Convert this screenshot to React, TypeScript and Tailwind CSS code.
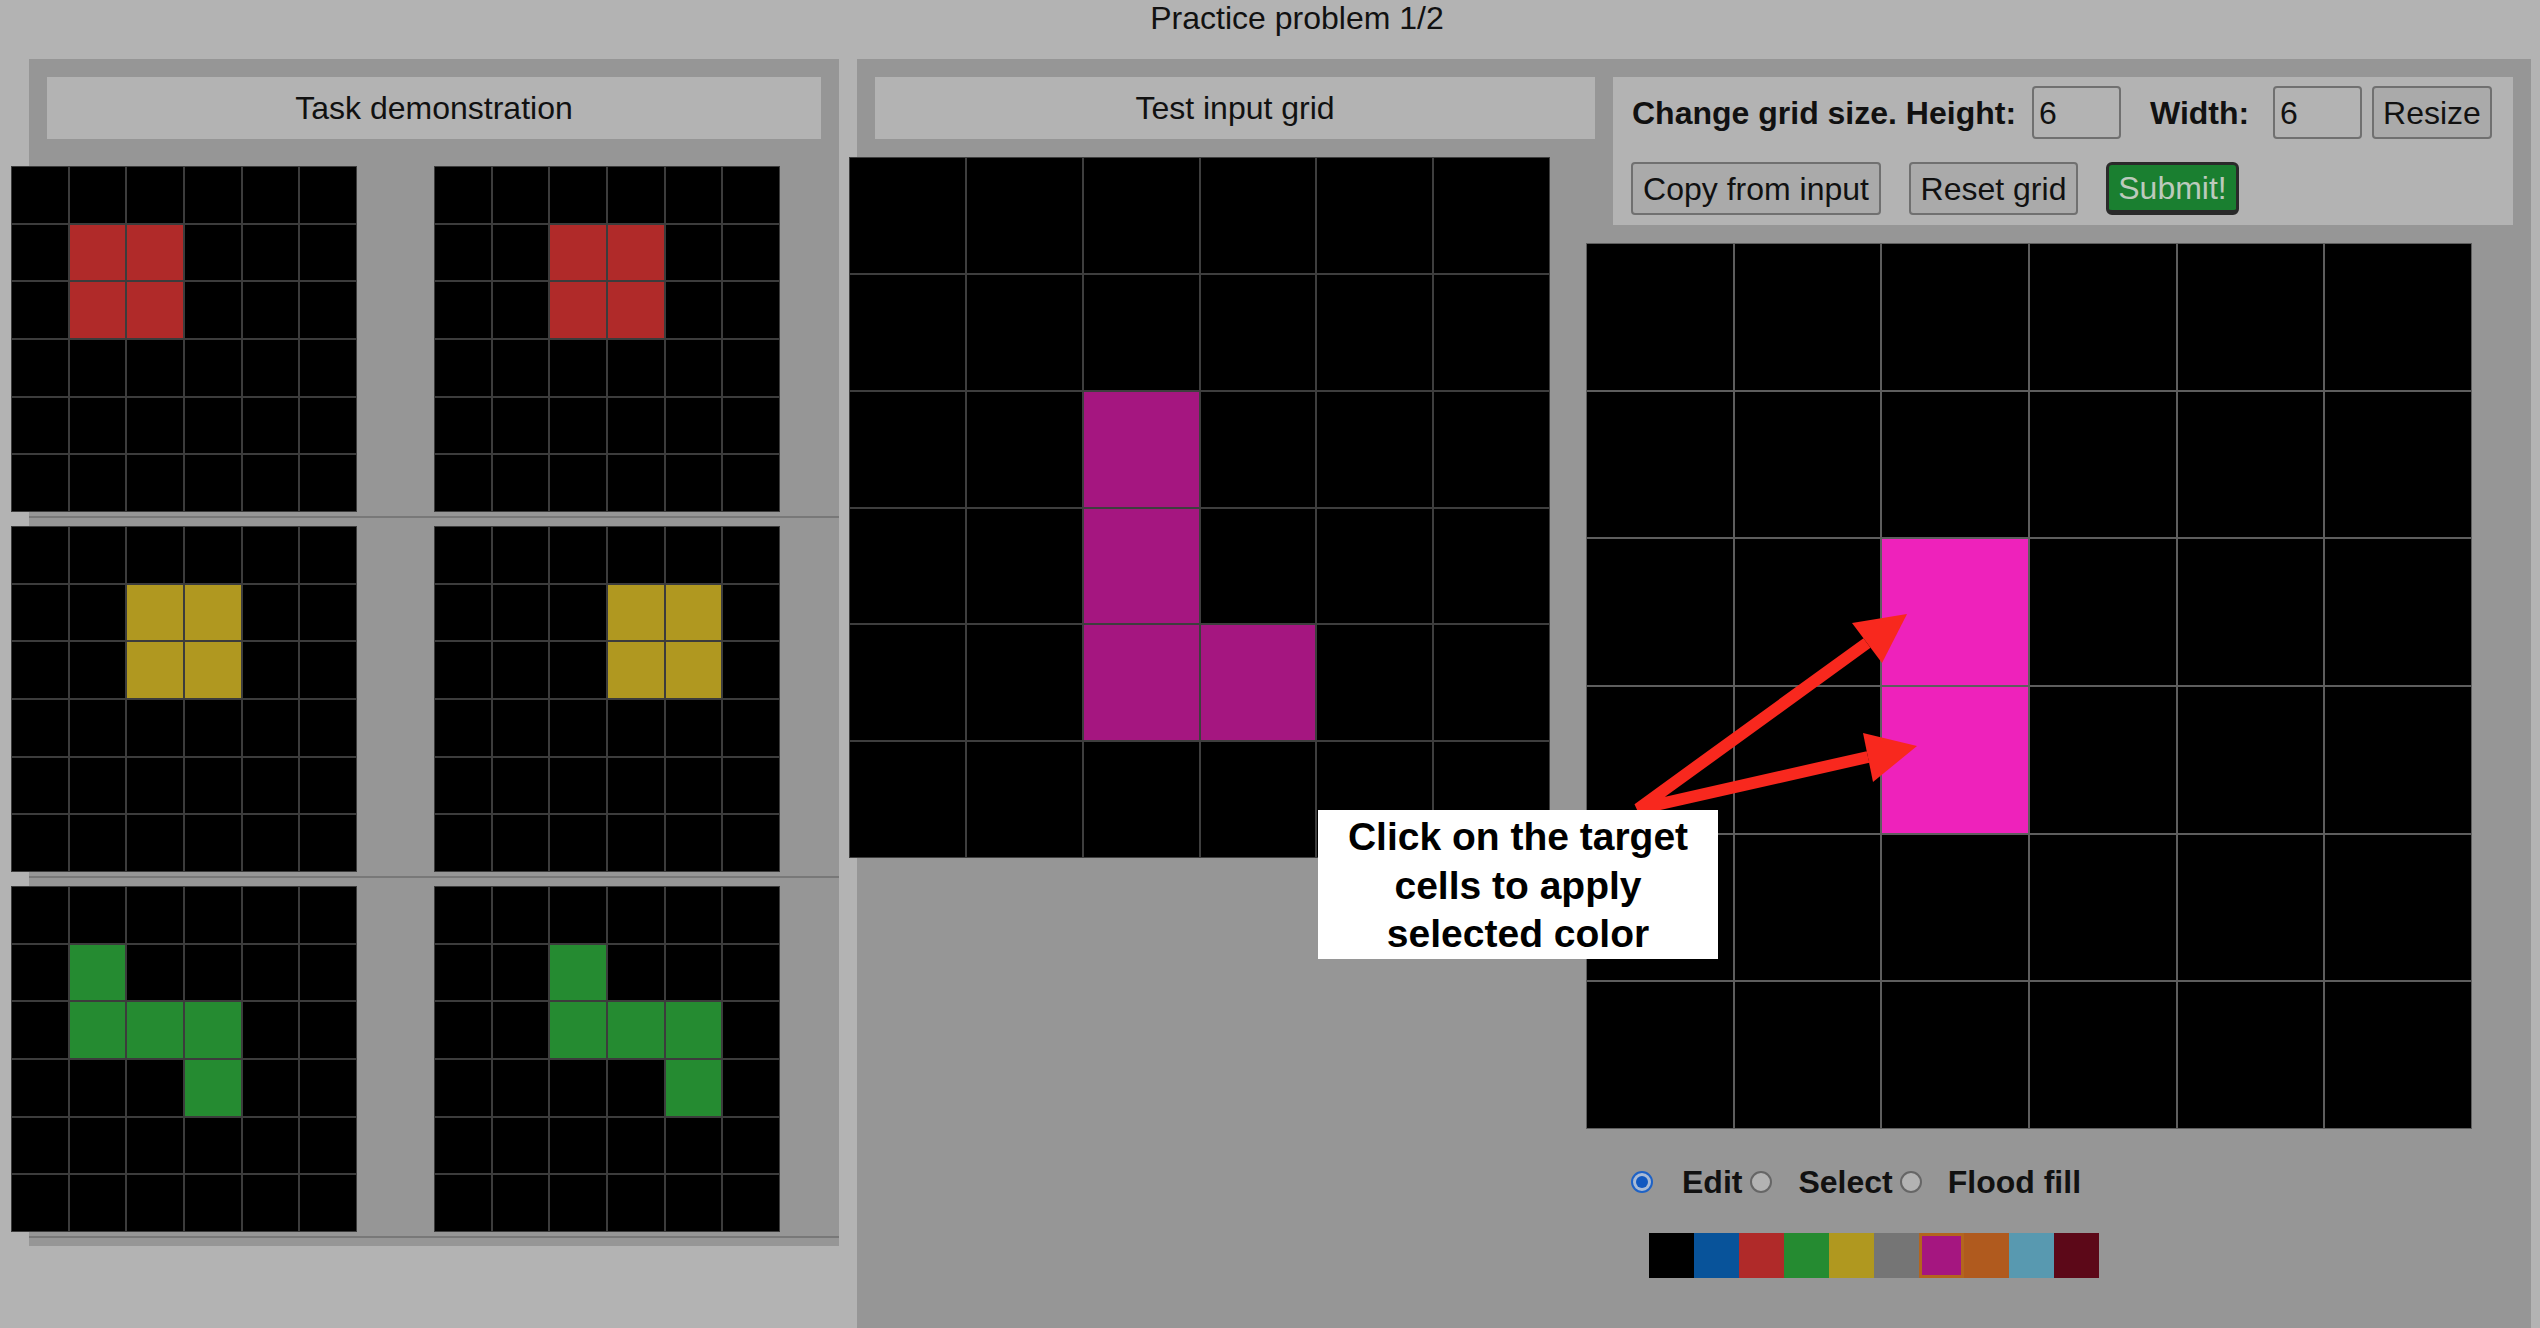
import React from 'react';

const colorClass: Record<string, string> = {
  '.': 'bg-black',
  R: 'bg-[#b02a29]',
  Y: 'bg-[#b09820]',
  G: 'bg-[#258b31]',
  M: 'bg-[#a51680]',
  P: 'bg-[#ee22bb]',
};

const demoPairs: string[][][] = [
  [
    ['......', '.RR...', '.RR...', '......', '......', '......'],
    ['......', '..RR..', '..RR..', '......', '......', '......'],
  ],
  [
    ['......', '..YY..', '..YY..', '......', '......', '......'],
    ['......', '...YY.', '...YY.', '......', '......', '......'],
  ],
  [
    ['......', '.G....', '.GGG..', '...G..', '......', '......'],
    ['......', '..G...', '..GGG.', '....G.', '......', '......'],
  ],
];

const testInput = ['......', '......', '..M...', '..M...', '..MM..', '......'];
const testOutput = ['......', '......', '..P...', '..P...', '......', '......'];

const palette = [
  'bg-black',
  'bg-[#08539a]',
  'bg-[#b02a29]',
  'bg-[#258b31]',
  'bg-[#b0981f]',
  'bg-[#757575]',
  'bg-[#a51680]',
  'bg-[#b05a1e]',
  'bg-[#5899b0]',
  'bg-[#5c0818]',
];

const Grid = ({ rows, sizeClass, lineClass }: { rows: string[]; sizeClass: string; lineClass: string }) => (
  <div className={`grid grid-cols-6 grid-rows-6 shrink-0 ${sizeClass}`}>
    {rows.map((row, r) =>
      row.split('').map((c, i) => <div key={`${r}-${i}`} className={`border ${lineClass} ${colorClass[c]}`} />)
    )}
  </div>
);

const Radio = ({ checked }: { checked?: boolean }) =>
  checked ? (
    <div className="w-[22px] h-[22px] rounded-full border-[2px] border-[#1e62c6] bg-[#a9bbd6] flex items-center justify-center shrink-0">
      <div className="w-[12px] h-[12px] rounded-full bg-[#1158c0]" />
    </div>
  ) : (
    <div className="w-[22px] h-[22px] rounded-full border-[2px] border-[#666] bg-[#b3b3b3] shrink-0" />
  );

const btn =
  'h-[53px] rounded-[4px] border-[2px] border-[#707070] bg-[#aaaaaa] text-[32px] text-[#111] flex items-center justify-center';

export default function App() {
  return (
    <div className="relative w-[2540px] h-[1328px] overflow-hidden bg-[#b3b3b3] font-['Liberation_Sans',Arial,sans-serif] text-[#111]">
      <div className="h-[59px] pl-[54px] text-center text-[32px] leading-[37px]">Practice problem 1/2</div>

      <div className="flex items-start pl-[29px] gap-[18px]">
        {/* task demonstration */}
        <div className="w-[810px] bg-[#969696] pt-[18px]">
          <div className="mx-[18px] h-[62px] bg-[#b3b3b3] flex items-center justify-center text-[32px]">
            Task demonstration
          </div>
          <div className="mt-[27px]">
            {demoPairs.map((pair, i) => (
              <div key={i} className="pb-[4px] border-b-[2px] border-[#787878] mb-[8px]">
                <div className="flex gap-[77px] ml-[-18px]">
                  <Grid rows={pair[0]} sizeClass="w-[346px] h-[346px]" lineClass="border-[#3c3c3c]" />
                  <Grid rows={pair[1]} sizeClass="w-[346px] h-[346px]" lineClass="border-[#3c3c3c]" />
                </div>
              </div>
            ))}
          </div>
        </div>

        {/* test + output */}
        <div className="w-[1674px] h-[1269px] bg-[#969696] p-[18px] flex items-start gap-[18px]">
          <div className="w-[720px]">
            <div className="h-[62px] bg-[#b3b3b3] flex items-center justify-center text-[32px]">Test input grid</div>
            <div className="mt-[18px] ml-[-26px]">
              <Grid rows={testInput} sizeClass="w-[701px] h-[701px]" lineClass="border-[#3e3e3e]" />
            </div>
          </div>

          <div className="w-[900px]">
            <div className="h-[148px] bg-[#b3b3b3] pt-[9px] pl-[18px]">
              <div className="flex items-center h-[53px]">
                <span className="w-[401px] pl-[1px] font-bold text-[32px]">Change grid size. Height:</span>
                <div className="w-[89px] h-[53px] rounded-[4px] border-[2px] border-[#707070] bg-[#b3b3b3] text-[32px] flex items-center pl-[5px]">
                  6
                </div>
                <span className="w-[123px] ml-[29px] font-bold text-[32px]">Width:</span>
                <div className="w-[89px] h-[53px] rounded-[4px] border-[2px] border-[#707070] bg-[#b3b3b3] text-[32px] flex items-center pl-[5px]">
                  6
                </div>
                <div className={`${btn} w-[120px] ml-[10px]`}>Resize</div>
              </div>
              <div className="flex items-center mt-[23px]">
                <div className={`${btn} w-[250px]`}>Copy from input</div>
                <div className={`${btn} w-[169px] ml-[28px]`}>Reset grid</div>
                <div className="w-[133px] h-[53px] ml-[28px] rounded-[6px] border-[3px] border-b-[5px] border-[#2a2a2a] bg-[#1a7f30] text-[32px] text-[#bccabc] flex items-center justify-center">
                  Submit!
                </div>
              </div>
            </div>

            <div className="mt-[18px] ml-[-27px]">
              <Grid rows={testOutput} sizeClass="w-[886px] h-[886px]" lineClass="border-[#5e5e5e]" />
            </div>

            <div className="mt-[34px] h-[37px] pl-[18px] flex items-center text-[32px] font-bold">
              <Radio checked />
              <span className="ml-[29px]">Edit</span>
              <div className="ml-[8px]">
                <Radio />
              </div>
              <span className="ml-[26px]">Select</span>
              <div className="ml-[7px]">
                <Radio />
              </div>
              <span className="ml-[26px]">Flood fill</span>
            </div>

            <div className="mt-[33px] pl-[36px] flex">
              {palette.map((c, i) => (
                <div
                  key={i}
                  className={`w-[45px] h-[45px] ${c} ${i === 6 ? 'border-[3px] border-[#b3651e]' : ''}`}
                />
              ))}
            </div>
          </div>
        </div>
      </div>

      {/* tutorial arrows */}
      <svg className="absolute left-0 top-0 pointer-events-none" width="2540" height="1328" viewBox="0 0 2540 1328">
        <polyline
          points="1867,643 1638,809 1868,757"
          fill="none"
          stroke="#f8281e"
          strokeWidth="12"
          strokeLinejoin="miter"
        />
        <polygon points="1907,614 1852,623 1882,663" fill="#f8281e" />
        <polygon points="1917,746 1863,733 1873,782" fill="#f8281e" />
      </svg>

      {/* tutorial callout */}
      <div className="absolute left-[1318px] top-[810px] w-[400px] h-[149px] bg-white pt-[3px] text-center font-bold text-[39px] leading-[48.5px] text-black">
        Click on the target
        <br />
        cells to apply
        <br />
        selected color
      </div>
    </div>
  );
}
